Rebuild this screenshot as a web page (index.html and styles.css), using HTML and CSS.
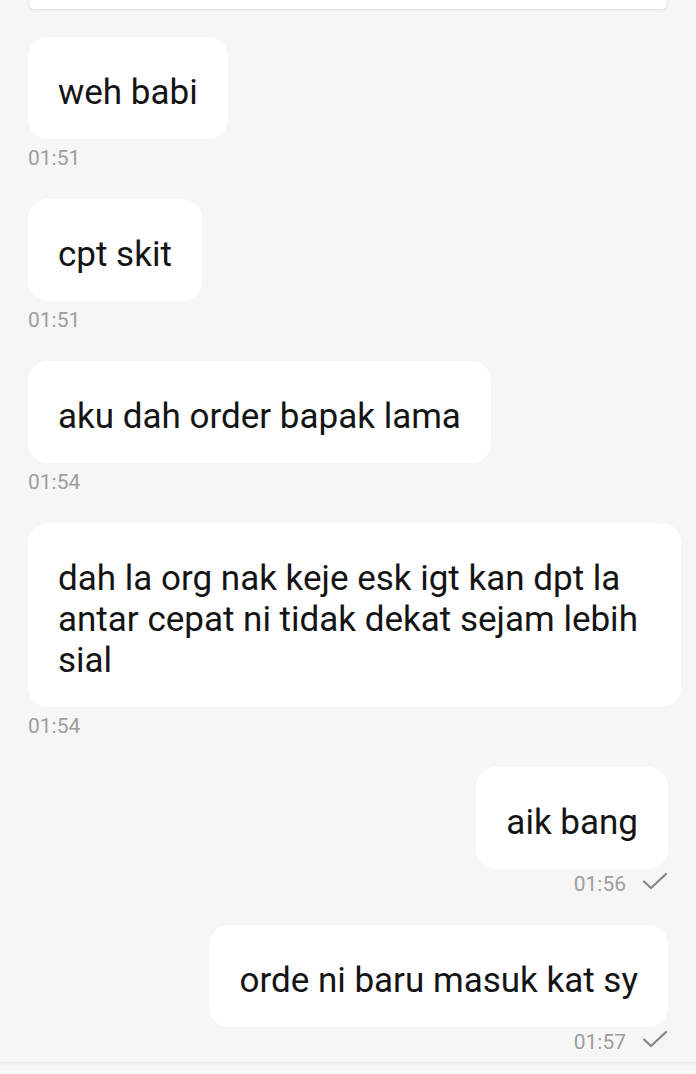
FILE: index.html
```html
<!DOCTYPE html>
<html lang="ms">
<head>
<meta charset="utf-8">
<title>Chat</title>
<link rel="stylesheet" href="styles.css">
</head>
<body>
<div class="topcard"></div>
<main class="chat">
  <div class="msg in">
    <div class="bubble">weh babi</div>
    <div class="meta"><span class="time">01:51</span></div>
  </div>
  <div class="msg in">
    <div class="bubble">cpt skit</div>
    <div class="meta"><span class="time">01:51</span></div>
  </div>
  <div class="msg in">
    <div class="bubble">aku dah order bapak lama</div>
    <div class="meta"><span class="time">01:54</span></div>
  </div>
  <div class="msg in">
    <div class="bubble">dah la org nak keje esk igt kan dpt la antar cepat ni tidak dekat sejam lebih sial</div>
    <div class="meta"><span class="time">01:54</span></div>
  </div>
  <div class="msg out">
    <div class="bubble">aik bang</div>
    <div class="meta"><span class="time">01:56</span><svg class="check" viewBox="0 0 26 18" width="26" height="18"><path d="M2 9.5 L9 16 L24 2" fill="none" stroke="#858585" stroke-width="2.2" stroke-linecap="round" stroke-linejoin="round"/></svg></div>
  </div>
  <div class="msg out">
    <div class="bubble">orde ni baru masuk kat sy</div>
    <div class="meta"><span class="time">01:57</span><svg class="check" viewBox="0 0 26 18" width="26" height="18"><path d="M2 9.5 L9 16 L24 2" fill="none" stroke="#858585" stroke-width="2.2" stroke-linecap="round" stroke-linejoin="round"/></svg></div>
  </div>
</main>
<div class="bottombar"></div>
</body>
</html>
```
FILE: styles.css
```css
html, body {
  margin: 0;
  padding: 0;
}
body {
  background: #f6f6f6;
  font-family: Roboto, "Noto Sans", sans-serif;
  color: #141414;
  width: 696px;
  height: 1074px;
  overflow: hidden;
}
.topcard {
  height: 9px;
  margin: 0 28px;
  background: #ffffff;
  border: 1px solid #e4e4e4;
  border-top: none;
  border-radius: 0 0 6px 6px;
  box-shadow: 0 1px 2px rgba(0, 0, 0, 0.04);
}
.chat {
  display: flex;
  flex-direction: column;
  gap: 29px;
  padding: 27px 28px 0 28px;
}
.msg {
  display: flex;
  flex-direction: column;
}
.msg.in {
  align-items: flex-start;
}
.msg.out {
  align-items: flex-end;
}
.bubble {
  background: #ffffff;
  border-radius: 20px;
  padding: 35px 30px 26px 30px;
  font-size: 35px;
  line-height: 41px;
  max-width: 593px;
}
.msg.in .bubble {
  margin-right: -13px;
}
.meta {
  display: flex;
  align-items: center;
  gap: 16px;
  margin-top: 7px;
  height: 24px;
}
.msg.out .meta {
  margin-top: 3px;
}
.time {
  font-size: 21px;
  line-height: 24px;
  color: #9e9e9e;
}
.check {
  display: block;
  margin-top: -6px;
}
.bottombar {
  margin-top: 8px;
  height: 20px;
  background: linear-gradient(#e8e8e8, #f6f6f6 4px, #fcfcfc);
}
```
